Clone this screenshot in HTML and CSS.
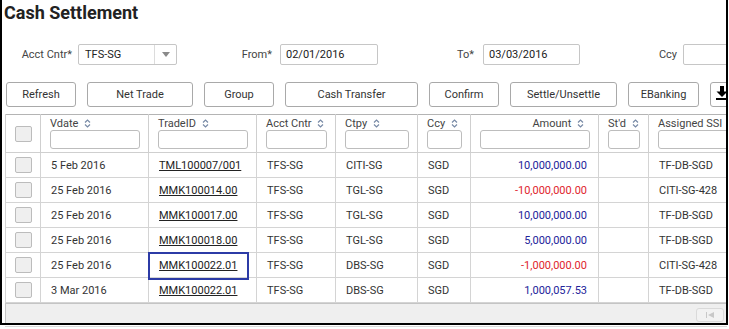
FILE: index.html
```html
<!DOCTYPE html>
<html lang="en">
<head>
  <meta charset="UTF-8" />
  <title>Cash Settlement</title>
  <link rel="stylesheet" href="styles.css">
</head>
<body>

  <div class="frame">
    <h1>Cash Settlement</h1>

    <div class="filters">
      <div class="field f1">
        <label>Acct Cntr*</label>
        <div class="select">
          <span class="select-text">TFS-SG</span>
          <span class="select-arrow"><svg width="8" height="5" viewBox="0 0 8 5"><path d="M0 0 L8 0 L4 5 Z" fill="#8a8a8a"/></svg></span>
        </div>
      </div>
      <div class="field f2">
        <label>From*</label>
        <input class="text-input" type="text" value="02/01/2016">
      </div>
      <div class="field f3">
        <label>To*</label>
        <input class="text-input" type="text" value="03/03/2016">
      </div>
      <div class="field f4">
        <label>Ccy</label>
        <input class="text-input wide" type="text" value="">
      </div>
    </div>

    <div class="toolbar">
      <button class="btn b-refresh">Refresh</button>
      <button class="btn b-net">Net Trade</button>
      <button class="btn b-group">Group</button>
      <button class="btn b-cash">Cash Transfer</button>
      <button class="btn b-confirm">Confirm</button>
      <button class="btn b-settle">Settle/Unsettle</button>
      <button class="btn b-ebank">EBanking</button>
      <button class="btn b-down">
        <svg width="14" height="16" viewBox="0 0 14 16">
          <rect x="5" y="1" width="4" height="6" fill="#000"/>
          <path d="M1.5 6.5 L12.5 6.5 L7 12 Z" fill="#000"/>
          <rect x="1" y="13" width="12" height="2" fill="#000"/>
        </svg>
      </button>
    </div>

    <div class="grid-wrap">
      <table class="grid">
        <colgroup>
          <col style="width:35px">
          <col style="width:108px">
          <col style="width:108px">
          <col style="width:79px">
          <col style="width:82px">
          <col style="width:53px">
          <col style="width:128px">
          <col style="width:50px">
          <col style="width:112px">
        </colgroup>
        <thead>
          <tr>
            <th class="chk-col"><span class="chk"></span></th>
            <th><div class="th-label">Vdate <span class="sort"></span></div><input class="filter" type="text"></th>
            <th><div class="th-label">TradeID <span class="sort"></span></div><input class="filter" type="text"></th>
            <th><div class="th-label">Acct Cntr <span class="sort"></span></div><input class="filter" type="text"></th>
            <th><div class="th-label">Ctpy <span class="sort"></span></div><input class="filter" type="text"></th>
            <th><div class="th-label">Ccy <span class="sort"></span></div><input class="filter" type="text"></th>
            <th class="num"><div class="th-label">Amount <span class="sort"></span></div><input class="filter" type="text"></th>
            <th><div class="th-label">St'd <span class="sort"></span></div><input class="filter" type="text"></th>
            <th><div class="th-label">Assigned SSI <span class="sort"></span></div><input class="filter" type="text"></th>
          </tr>
        </thead>
        <tbody>
          <tr>
            <td class="chk-col"><span class="chk"></span></td>
            <td>5 Feb 2016</td>
            <td><a href="#">TML100007/001</a></td>
            <td>TFS-SG</td>
            <td>CITI-SG</td>
            <td>SGD</td>
            <td class="num pos">10,000,000.00</td>
            <td></td>
            <td>TF-DB-SGD</td>
          </tr>
          <tr>
            <td class="chk-col"><span class="chk"></span></td>
            <td>25 Feb 2016</td>
            <td><a href="#">MMK100014.00</a></td>
            <td>TFS-SG</td>
            <td>TGL-SG</td>
            <td>SGD</td>
            <td class="num neg">-10,000,000.00</td>
            <td></td>
            <td>CITI-SG-428</td>
          </tr>
          <tr>
            <td class="chk-col"><span class="chk"></span></td>
            <td>25 Feb 2016</td>
            <td><a href="#">MMK100017.00</a></td>
            <td>TFS-SG</td>
            <td>TGL-SG</td>
            <td>SGD</td>
            <td class="num pos">10,000,000.00</td>
            <td></td>
            <td>TF-DB-SGD</td>
          </tr>
          <tr>
            <td class="chk-col"><span class="chk"></span></td>
            <td>25 Feb 2016</td>
            <td><a href="#">MMK100018.00</a></td>
            <td>TFS-SG</td>
            <td>TGL-SG</td>
            <td>SGD</td>
            <td class="num pos">5,000,000.00</td>
            <td></td>
            <td>TF-DB-SGD</td>
          </tr>
          <tr>
            <td class="chk-col"><span class="chk"></span></td>
            <td>25 Feb 2016</td>
            <td class="marked"><a href="#">MMK100022.01</a><span class="mark-box"></span></td>
            <td>TFS-SG</td>
            <td>DBS-SG</td>
            <td>SGD</td>
            <td class="num neg">-1,000,000.00</td>
            <td></td>
            <td>CITI-SG-428</td>
          </tr>
          <tr>
            <td class="chk-col"><span class="chk"></span></td>
            <td>3 Mar 2016</td>
            <td><a href="#">MMK100022.01</a></td>
            <td>TFS-SG</td>
            <td>DBS-SG</td>
            <td>SGD</td>
            <td class="num pos">1,000,057.53</td>
            <td></td>
            <td>TF-DB-SGD</td>
          </tr>
        </tbody>
      </table>
      <div class="grid-footer">
        <span class="pager">
          <svg width="9" height="6" viewBox="0 0 9 6"><rect x="0" y="0" width="1" height="6" fill="#c8c8c8"/><path d="M2 3 L8 0 L8 6 Z" fill="#c8c8c8"/></svg>
        </span>
      </div>
    </div>
  </div>
  <div class="under-line"></div>

</body>
</html>
```

FILE: styles.css
```css
html, body {
  margin: 0;
  padding: 0;
  background: #fff;
}

body {
  font-family: Roboto, "Liberation Sans", sans-serif;
  font-size: 11px;
  color: #333;
}

.frame {
  width: 728px;
  height: 325px;
  box-sizing: border-box;
  border: 2px solid #000;
  border-top: none;
  padding-left: 2px;
  overflow: hidden;
}

.under-line {
  margin: 1px 2px 0 5px;
  border-top: 1px solid #d9d9d9;
}

h1 {
  margin: 0;
  padding-top: 1px;
  font-size: 18px;
  line-height: 24px;
  font-weight: 700;
  color: #222;
}

/* filter row */

.filters {
  display: flex;
  align-items: center;
  height: 21px;
  margin-top: 19px;
}

.field {
  display: flex;
  align-items: center;
  flex-shrink: 0;
}

.field label {
  text-align: right;
  color: #444;
}

.f1 label { width: 68px; margin-right: 6px; }
.f2 label { width: 95px; margin-right: 8px; }
.f3 label { width: 96px; margin-right: 9px; }
.f4 label { width: 97px; margin-right: 6px; }

.select {
  display: flex;
  width: 99px;
  height: 21px;
  box-sizing: border-box;
  border: 1px solid #c6c6c6;
  border-radius: 2px;
}

.select-text {
  flex: 1;
  padding-left: 6px;
  line-height: 19px;
  color: #222;
}

.select-arrow {
  width: 21px;
  border-left: 1px solid #dcdcdc;
  display: flex;
  align-items: center;
  justify-content: center;
}

.text-input {
  width: 98px;
  height: 21px;
  box-sizing: border-box;
  border: 1px solid #c6c6c6;
  border-radius: 2px;
  padding: 0 5px;
  font-family: inherit;
  font-size: 11px;
  color: #222;
  outline: none;
}

.f3 .text-input { width: 97px; }
.text-input.wide { width: 80px; }

/* buttons */

.toolbar {
  display: flex;
  gap: 11px;
  margin-top: 17px;
  padding-left: 2px;
}

.btn {
  flex-shrink: 0;
  height: 25px;
  padding: 0;
  background: #fff;
  border: 1px solid #a9a9a9;
  border-radius: 3px;
  font-family: inherit;
  font-size: 11px;
  color: #333;
}

.b-refresh { width: 70px; }
.b-net { width: 106px; }
.b-group { width: 70px; }
.b-cash { width: 133px; }
.b-confirm { width: 70px; }
.b-settle { width: 107px; }
.b-ebank { width: 71px; }

.b-down {
  width: 30px;
  display: flex;
  align-items: flex-start;
  padding: 2px 0 0 4px;
}

/* grid */

.grid-wrap {
  margin-top: 7px;
  margin-left: 1px;
}

.grid {
  border-collapse: collapse;
  table-layout: fixed;
  width: 755px;
  border-top: 1px solid #b4b4b4;
  border-left: 1px solid #b4b4b4;
}

.grid th {
  height: 38px;
  box-sizing: border-box;
  padding: 2px 8px 3px 9px;
  vertical-align: top;
  text-align: left;
  font-weight: 400;
  color: #444;
  border: 1px solid #cfcfcf;
  border-top: none;
}

.th-label {
  line-height: 13px;
  height: 13px;
  white-space: nowrap;
}

.grid th.num .th-label {
  text-align: right;
  padding-right: 6px;
}

.sort {
  display: inline-block;
  width: 7px;
  height: 9px;
  margin-left: 3px;
  vertical-align: -1px;
  background: url("data:image/svg+xml,%3Csvg xmlns='http://www.w3.org/2000/svg' width='7' height='9'%3E%3Cpath d='M1 3.5 L3.5 1 L6 3.5 M1 5.5 L3.5 8 L6 5.5' fill='none' stroke='%23788aa6' stroke-width='1.2'/%3E%3C/svg%3E") no-repeat;
}

.filter {
  display: block;
  width: 100%;
  height: 19px;
  margin-top: 0;
  box-sizing: border-box;
  border: 1px solid #bdbdbd;
  border-radius: 3px;
  outline: none;
}

.grid td {
  height: 25px;
  box-sizing: border-box;
  padding: 0 10px;
  border: 1px solid #d4d4d4;
  color: #333;
  white-space: nowrap;
}

.grid .chk-col {
  padding: 0;
  text-align: center;
  vertical-align: middle;
}

.grid th.chk-col {
  padding-top: 0;
}

.chk {
  display: inline-block;
  width: 17px;
  height: 16px;
  box-sizing: border-box;
  background: #efefef;
  border: 1px solid #bcbcbc;
  border-radius: 2px;
  vertical-align: middle;
}

.grid a {
  color: #222;
  text-decoration: underline;
}

.grid .num {
  text-align: right;
}

.grid td.num {
  padding-right: 11px;
}

.pos { color: #23239a !important; }
.neg { color: #e0252c !important; }

.marked {
  position: relative;
}

.mark-box {
  position: absolute;
  left: -1px;
  top: -1px;
  width: 101px;
  height: 28px;
  box-sizing: border-box;
  border: 2px solid #2c3ba6;
}

.grid-footer {
  display: flex;
  justify-content: flex-end;
  align-items: center;
  height: 22px;
  margin-right: 0;
  background: #efefef;
  border-left: 1px solid #c4c4c4;
  border-top: 1px solid #c4c4c4;
  padding-right: 2px;
}

.pager {
  display: flex;
  align-items: center;
  justify-content: center;
  width: 28px;
  height: 14px;
  box-sizing: border-box;
  border: 1px solid #dadada;
  border-radius: 3px;
  background: #f2f2f2;
}
```
